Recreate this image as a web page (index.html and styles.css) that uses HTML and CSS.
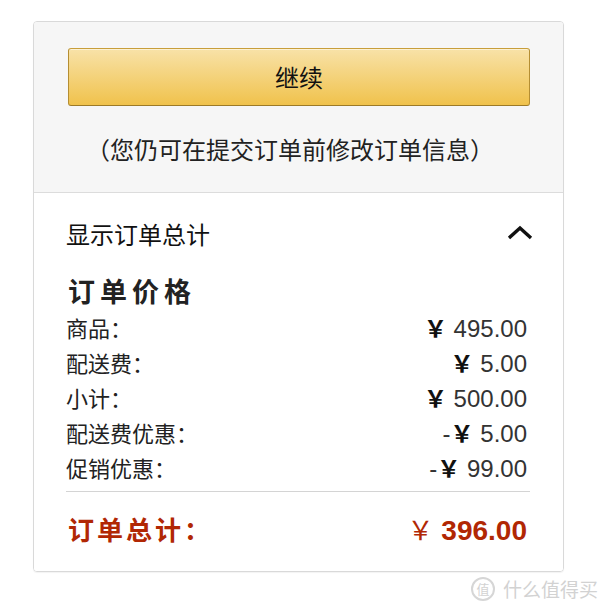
FILE: index.html
```html
<!DOCTYPE html>
<html lang="zh-CN">
<head>
<meta charset="utf-8">
<title>订单总计</title>
<link rel="stylesheet" href="styles.css">
</head>
<body>
<div class="card">
  <div class="top">
    <button class="btn" type="button">继续</button>
    <p class="note">（您仍可在提交订单前修改订单信息）</p>
  </div>
  <div class="bottom">
    <div class="toggle">
      <span>显示订单总计</span>
      <svg class="chev" width="26" height="16" viewBox="0 0 26 16"><polyline points="2,13 13,3 24,13" fill="none" stroke="#111" stroke-width="3.4"/></svg>
    </div>
    <h2 class="title">订单价格</h2>
    <div class="rows">
      <div class="row"><span>商品：</span><span class="amt"><span class="yen">￥</span> 495.00</span></div>
      <div class="row"><span>配送费：</span><span class="amt"><span class="yen">￥</span> 5.00</span></div>
      <div class="row"><span>小计：</span><span class="amt"><span class="yen">￥</span> 500.00</span></div>
      <div class="row"><span>配送费优惠：</span><span class="amt">-<span class="yen">￥</span> 5.00</span></div>
      <div class="row"><span>促销优惠：</span><span class="amt">-<span class="yen">￥</span> 99.00</span></div>
    </div>
    <div class="total">
      <span class="tlabel">订单总计：</span>
      <span class="tamt"><span class="yen">￥</span> 396.00</span>
    </div>
  </div>
</div>
<div class="watermark"><span class="wm-circle">值</span><span>什么值得买</span></div>
</body>
</html>
```
FILE: styles.css
```css
html, body {
  margin: 0;
  padding: 0;
  background: #fff;
}
body {
  width: 600px;
  height: 610px;
  position: relative;
  font-family: "Noto Sans CJK SC", "Liberation Sans", sans-serif;
  color: #111;
}
.card {
  margin: 21px 0 0 33px;
  width: 529px;
  border: 1px solid #d9d9d9;
  border-radius: 4px;
  overflow: hidden;
  box-shadow: 0 1px 1px rgba(0,0,0,0.05);
}
.top {
  background: #f6f6f6;
  padding: 26px 33px 0 34px;
  border-bottom: 1px solid #dcdcdc;
  height: 144px;
}
.btn {
  display: block;
  width: 462px;
  height: 58px;
  margin: 0;
  padding: 0;
  border: 1px solid;
  border-color: #c89e3a #b58e32 #9c7a28;
  border-radius: 3px;
  background: linear-gradient(to bottom, #f8e2a8, #f0c24c);
  box-shadow: inset 0 1px 0 rgba(255,255,255,0.5);
  font-family: "Noto Sans CJK SC", sans-serif;
  font-size: 24px;
  color: #111;
  line-height: 56px;
}
.note {
  margin: 28px 0 0;
  padding-right: 18px;
  text-align: center;
  font-size: 24px;
  line-height: 30px;
  color: #222;
}
.bottom {
  background: #fff;
  padding: 22px 33px 23px 32px;
}
.toggle {
  display: flex;
  justify-content: space-between;
  align-items: center;
  height: 36px;
  font-size: 24px;
}
.chev {
  display: block;
  margin-right: -3px;
}
.title {
  margin: 22px 0 0 2px;
  font-size: 27px;
  line-height: 36px;
  font-weight: bold;
  letter-spacing: 5px;
  color: #222;
}
.rows {
  border-bottom: 1px solid #d4d4d4;
  padding-bottom: 7px;
}
.row {
  display: flex;
  justify-content: space-between;
  align-items: center;
  height: 35px;
  font-size: 22px;
  color: #222;
}
.amt {
  font-family: "Liberation Sans", "Noto Sans CJK SC", sans-serif;
  font-size: 24px;
  color: #333;
  padding-right: 3px;
}
.yen {
  font-family: "Noto Sans CJK SC", sans-serif;
  font-weight: bold;
  font-size: 23px;
  color: #111;
}
.total {
  display: flex;
  justify-content: space-between;
  align-items: center;
  height: 40px;
  margin-top: 16px;
  color: #b12704;
  font-weight: bold;
}
.tlabel {
  font-size: 26px;
  letter-spacing: 3px;
  margin-left: 2px;
}
.tamt {
  font-family: "Liberation Sans", "Noto Sans CJK SC", sans-serif;
  font-size: 28px;
  padding-right: 3px;
}
.tamt .yen {
  color: #b12704;
  font-weight: normal;
  font-size: 26px;
}
.watermark {
  position: absolute;
  right: 2px;
  bottom: 8px;
  display: flex;
  align-items: center;
  gap: 8px;
  color: #d2d2d2;
  font-size: 19px;
}
.wm-circle {
  display: inline-flex;
  align-items: center;
  justify-content: center;
  width: 20px;
  height: 20px;
  border: 2px solid #d6d6d6;
  border-radius: 50%;
  font-size: 13px;
}
```
